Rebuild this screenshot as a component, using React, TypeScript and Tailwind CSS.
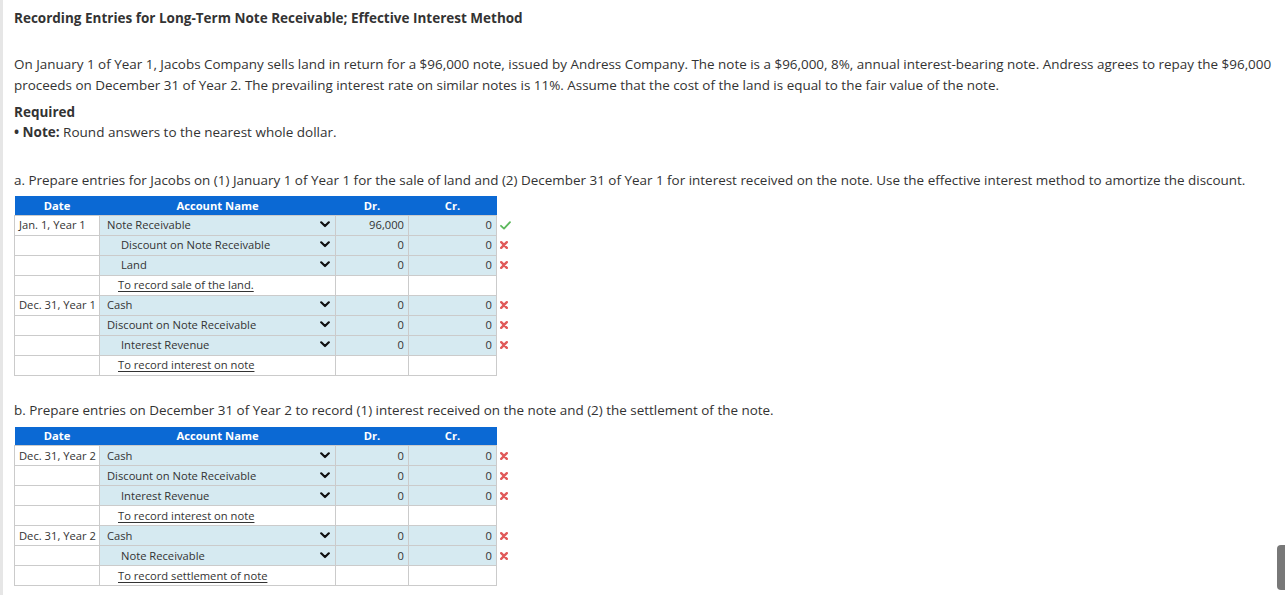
import React from "react";

type Row = {
  date?: string;
  account: string;
  indent?: "none" | "credit" | "memo";
  dr?: string;
  cr?: string;
  mark?: "check" | "x";
  memo?: boolean;
};

const Chevron = () => (
  <svg width="10" height="7" viewBox="0 0 10 7" className="shrink-0">
    <path d="M1.2 1.3 L5 5 L8.8 1.3" fill="none" stroke="#111" strokeWidth="2.2" strokeLinecap="round" strokeLinejoin="round" />
  </svg>
);

const Check = () => (
  <svg width="11" height="9" viewBox="0 0 11 9">
    <path d="M1 4.8 L4 7.6 L10 1.2" fill="none" stroke="#5cb85c" strokeWidth="1.8" strokeLinecap="round" strokeLinejoin="round" />
  </svg>
);

const XMark = () => (
  <svg width="8" height="8" viewBox="0 0 8 8">
    <path d="M1.2 1.2 L6.8 6.8 M6.8 1.2 L1.2 6.8" fill="none" stroke="#e05a5a" strokeWidth="2.4" strokeLinecap="round" />
  </svg>
);

function JournalTable({ rows }: { rows: Row[] }) {
  return (
    <table className="border-collapse text-[11.2px] text-[#333] leading-none" style={{ tableLayout: "fixed" }}>
      <colgroup>
        <col className="w-[85px]" />
        <col className="w-[236px]" />
        <col className="w-[73px]" />
        <col className="w-[88px]" />
        <col className="w-[20px]" />
      </colgroup>
      <thead>
        <tr className="h-[19px] bg-[#0b69d4] text-white font-bold">
          <th className="text-center font-bold">Date</th>
          <th className="text-center font-bold">Account Name</th>
          <th className="text-center font-bold">Dr.</th>
          <th className="text-center font-bold">Cr.</th>
          <th className="bg-white"></th>
        </tr>
      </thead>
      <tbody>
        {rows.map((r, i) => (
          <tr key={i} className="h-[20px]">
            <td className="border border-[#cbcbcb] bg-white pl-[4px] whitespace-nowrap">{r.date ?? ""}</td>
            {r.memo ? (
              <td className="border border-[#cbcbcb] bg-white pl-[18px]">
                <span className="underline underline-offset-[2px]">{r.account}</span>
              </td>
            ) : (
              <td className="border border-[#cbcbcb] bg-[#d6eaf1] pr-[5px]">
                <div className={`flex items-center justify-between ${r.indent === "credit" ? "pl-[21px]" : "pl-[7px]"}`}>
                  <span>{r.account}</span>
                  <Chevron />
                </div>
              </td>
            )}
            <td className={`border border-[#cbcbcb] text-right pr-[4px] ${r.memo ? "bg-white" : "bg-[#d6eaf1]"}`}>
              {r.memo ? "" : r.dr}
            </td>
            <td className={`border border-[#cbcbcb] text-right pr-[4px] ${r.memo ? "bg-white" : "bg-[#d6eaf1]"}`}>
              {r.memo ? "" : r.cr}
            </td>
            <td className="pl-[3px] bg-white">
              <div className="flex items-center">
                {r.mark === "check" ? <Check /> : r.mark === "x" ? <XMark /> : null}
              </div>
            </td>
          </tr>
        ))}
      </tbody>
    </table>
  );
}

const tableA: Row[] = [
  { date: "Jan. 1, Year 1", account: "Note Receivable", dr: "96,000", cr: "0", mark: "check" },
  { account: "Discount on Note Receivable", indent: "credit", dr: "0", cr: "0", mark: "x" },
  { account: "Land", indent: "credit", dr: "0", cr: "0", mark: "x" },
  { account: "To record sale of the land.", memo: true },
  { date: "Dec. 31, Year 1", account: "Cash", dr: "0", cr: "0", mark: "x" },
  { account: "Discount on Note Receivable", dr: "0", cr: "0", mark: "x" },
  { account: "Interest Revenue", indent: "credit", dr: "0", cr: "0", mark: "x" },
  { account: "To record interest on note", memo: true },
];

const tableB: Row[] = [
  { date: "Dec. 31, Year 2", account: "Cash", dr: "0", cr: "0", mark: "x" },
  { account: "Discount on Note Receivable", dr: "0", cr: "0", mark: "x" },
  { account: "Interest Revenue", indent: "credit", dr: "0", cr: "0", mark: "x" },
  { account: "To record interest on note", memo: true },
  { date: "Dec. 31, Year 2", account: "Cash", dr: "0", cr: "0", mark: "x" },
  { account: "Note Receivable", indent: "credit", dr: "0", cr: "0", mark: "x" },
  { account: "To record settlement of note", memo: true },
];

export default function App() {
  return (
    <div
      className="relative w-[1285px] h-[595px] overflow-hidden bg-white text-[#333]"
      style={{ fontFamily: '"Open Sans", "Noto Sans", sans-serif' }}
    >
      <div className="h-full border-l-[3px] border-[#e6e6e6] pl-[11px] pr-[8px] pt-[8px]">
        <div className="text-[13.5px] font-bold leading-[20px] text-[#333]">
          Recording Entries for Long-Term Note Receivable; Effective Interest Method
        </div>
        <p className="mt-[26px] text-[13.45px] leading-[21px]">
          On January 1 of Year 1, Jacobs Company sells land in return for a $96,000 note, issued by Andress Company. The note is a $96,000, 8%, annual interest-bearing note. Andress agrees to repay the $96,000 proceeds on December 31 of Year 2. The prevailing interest rate on similar notes is 11%. Assume that the cost of the land is equal to the fair value of the note.
        </p>
        <div className="mt-[6px] text-[13.5px] font-bold leading-[20px]">Required</div>
        <div className="text-[13.5px] leading-[20px]">
          <span className="font-bold">• Note:</span> Round answers to the nearest whole dollar.
        </div>
        <div className="mt-[28px] text-[13.45px] leading-[20px]">
          a. Prepare entries for Jacobs on (1) January 1 of Year 1 for the sale of land and (2) December 31 of Year 1 for interest received on the note. Use the effective interest method to amortize the discount.
        </div>
        <div className="mt-[6px]">
          <JournalTable rows={tableA} />
        </div>
        <div className="mt-[24px] text-[13.45px] leading-[20px]">
          b. Prepare entries on December 31 of Year 2 to record (1) interest received on the note and (2) the settlement of the note.
        </div>
        <div className="mt-[7px]">
          <JournalTable rows={tableB} />
        </div>
      </div>
      <div className="absolute left-[1277px] top-[545px] h-[45px] w-[12px] rounded-[4px] bg-[#787878]" />
    </div>
  );
}
